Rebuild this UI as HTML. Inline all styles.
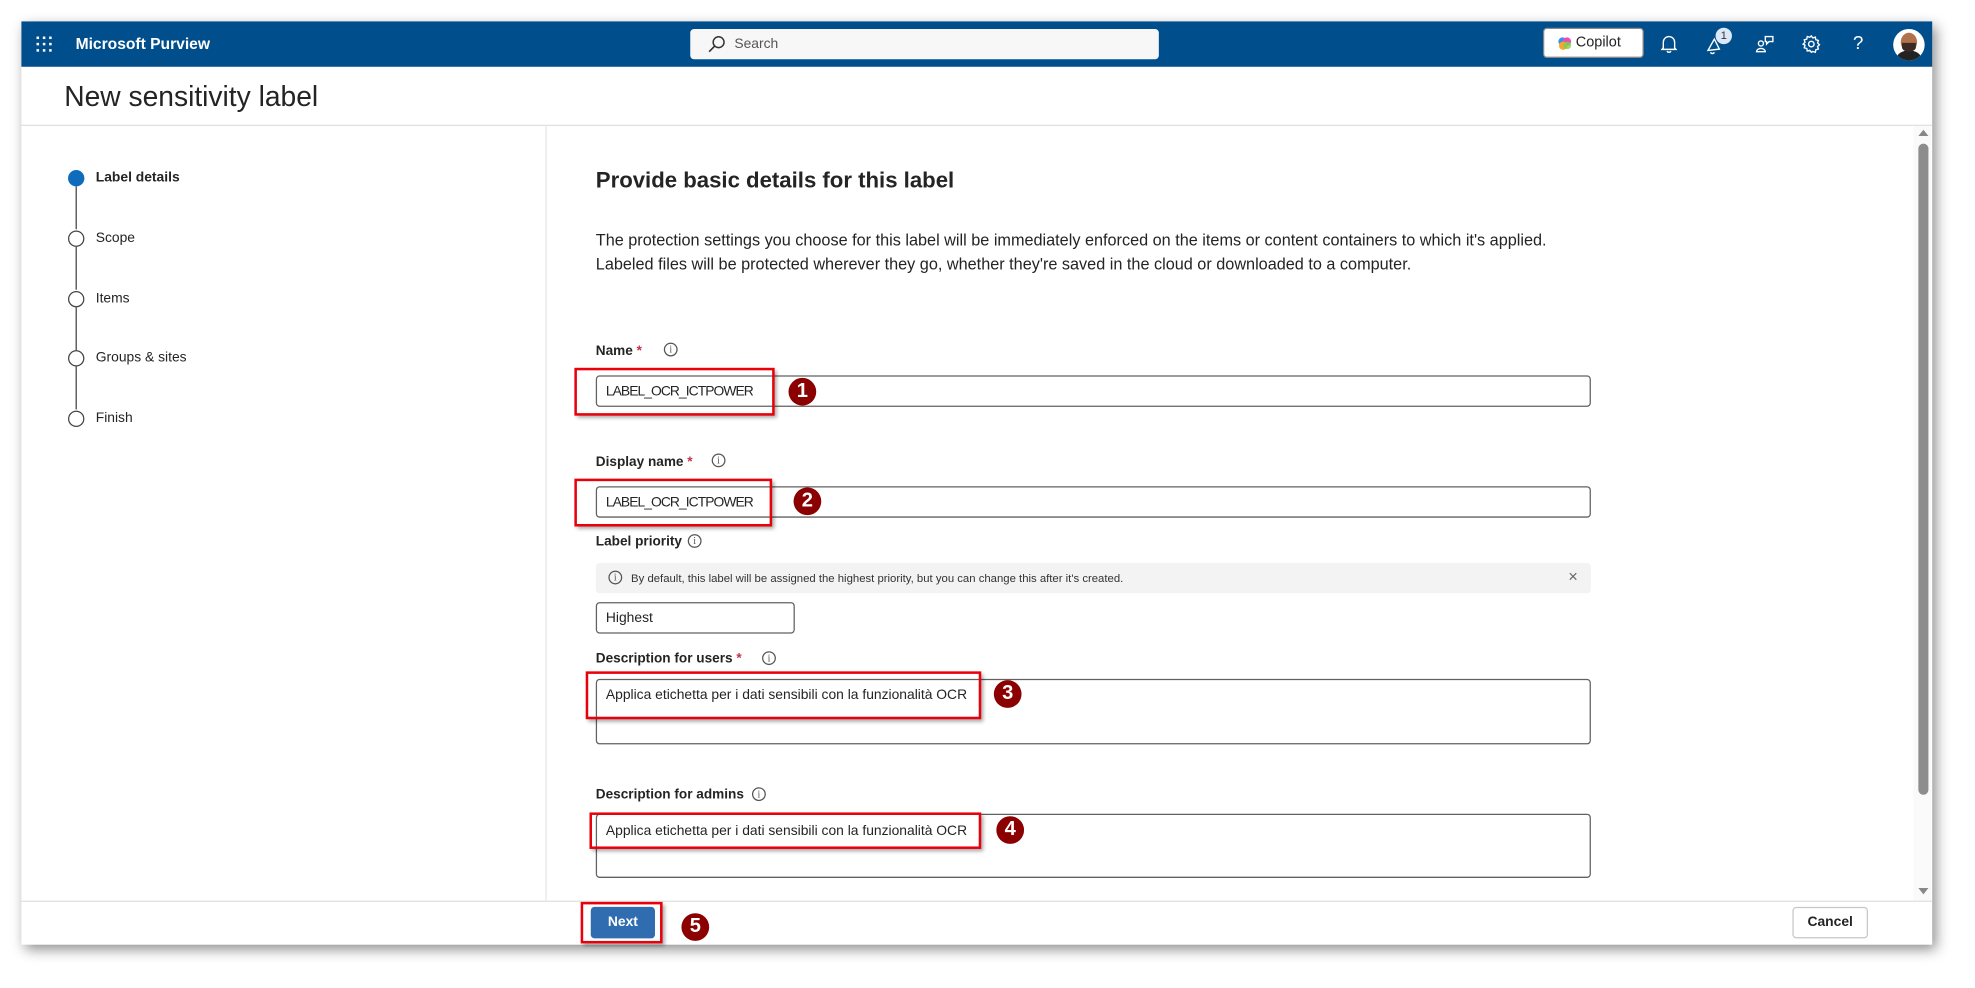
<!DOCTYPE html>
<html><head><meta charset="utf-8"><style>
*{box-sizing:border-box;margin:0;padding:0}
html,body{width:1975px;height:987px;overflow:hidden;background:#fff;font-family:"Liberation Sans",sans-serif;color:#242424}
#s{position:absolute;left:0;top:0;width:1568px;height:784px;transform:scale(1.2596);transform-origin:0 0}
.a{position:absolute}
.win{left:17px;top:17px;width:1517px;height:733px;background:#fff;box-shadow:3px 4px 10px rgba(0,0,0,.45)}
.hdr{left:17px;top:17px;width:1517px;height:36px;background:#004e8c}
.lbl{font-size:10.8px;font-weight:bold;color:#242424}
.inp{border:1px solid #616161;border-radius:3px;background:#fff;font-size:11px;padding-left:7px;color:#242424}
.red{border:2.5px solid #e8000b;box-shadow:2px 2px 3px rgba(0,0,0,.35)}
.num{width:22px;height:22px;border-radius:50%;background:#8b0000;color:#fff;font-weight:bold;font-size:16px;text-align:center;line-height:22px}
.step{left:54px;width:13px;height:13px;border-radius:50%;border:1.6px solid #444;background:#fff}
.stl{left:76px;font-size:11px}
.vl{left:60px;width:1px;background:#444}
.inf{width:11px;height:11px;border:1px solid #555;border-radius:50%;font-size:8px;text-align:center;line-height:9px;color:#555;font-family:"Liberation Serif",serif}
.lo{letter-spacing:-.75px}
</style></head><body><div id="s">
<div class="a win"></div>
<div class="a hdr"></div>
<svg class="a" style="left:28px;top:28px" width="14" height="14"><g fill="#fff"><rect x="1" y="1" width="2" height="2"/><rect x="6" y="1" width="2" height="2"/><rect x="11" y="1" width="2" height="2"/><rect x="1" y="6" width="2" height="2"/><rect x="6" y="6" width="2" height="2"/><rect x="11" y="6" width="2" height="2"/><rect x="1" y="11" width="2" height="2"/><rect x="6" y="11" width="2" height="2"/><rect x="11" y="11" width="2" height="2"/></g></svg>
<div class="a" style="left:60px;top:28px;color:#fff;font-size:12.4px;font-weight:bold">Microsoft Purview</div>
<div class="a" style="left:548px;top:23px;width:372px;height:24px;background:#f7f7f7;border-radius:3px"></div>
<svg class="a" style="left:561px;top:27px" width="16" height="16"><circle cx="9.5" cy="6.5" r="4.3" fill="none" stroke="#333" stroke-width="1.2"/><path d="M6.3 9.7L2 14" stroke="#333" stroke-width="1.3"/></svg>
<div class="a" style="left:583px;top:29px;font-size:11px;color:#555">Search</div>
<div class="a" style="left:1225px;top:22px;width:80px;height:24px;background:#fff;border:1px solid #888;border-radius:3px"></div>
<svg class="a" style="left:1237px;top:29px" width="11" height="11"><circle cx="3.5" cy="4" r="3.3" fill="#3b8df0"/><circle cx="7" cy="4" r="3.3" fill="#e94fb7"/><circle cx="4" cy="7.3" r="3.3" fill="#f3a72f"/><circle cx="7.3" cy="7" r="3" fill="#7ad04c" opacity=".8"/></svg>
<div class="a" style="left:1251px;top:28px;font-size:11.5px;color:#242424">Copilot</div>
<svg class="a" style="left:1317px;top:27px" width="16" height="16" fill="none" stroke="#fff" stroke-width="1.1"><path d="M3.5 11V6.5a4.5 4.5 0 0 1 9 0V11l1 1.2h-11z"/><path d="M6.5 13.5a1.6 1.6 0 0 0 3 0"/></svg>
<svg class="a" style="left:1354px;top:28px" width="16" height="16" fill="none" stroke="#fff" stroke-width="1.1"><path d="M2 12l5-9 4 8z"/><path d="M4 13.5a1.6 1.6 0 0 0 3 0"/></svg>
<div class="a" style="left:1362px;top:22px;width:13px;height:13px;border-radius:50%;background:#dbe8f8;color:#333;font-size:9px;text-align:center;line-height:13px">1</div>
<svg class="a" style="left:1393px;top:27px" width="16" height="16" fill="none" stroke="#fff" stroke-width="1.1"><circle cx="5" cy="7.5" r="2"/><path d="M1.5 14a3.5 2.5 0 0 1 7 0z"/><path d="M8.5 2h6v4h-3l-2 2v-2h-1z"/></svg>
<svg class="a" style="left:1430px;top:27px" width="16" height="16" fill="none" stroke="#fff" stroke-width="1.1"><circle cx="8" cy="8" r="2.2"/><path d="M8 1.5l1.2 1.6 2-.6.4 2 2 .6-.6 2 1.5 1.4-1.5 1.4.6 2-2 .6-.4 2-2-.6L8 14.5l-1.2-1.6-2 .6-.4-2-2-.6.6-2L1.5 8l1.5-1.4-.6-2 2-.6.4-2 2 .6z"/></svg>
<div class="a" style="left:1471px;top:26px;color:#fff;font-size:15px">?</div>
<div class="a" style="left:1503px;top:23px;width:25px;height:25px;border-radius:50%;background:#fff;overflow:hidden"><div class="a" style="left:6px;top:3px;width:13px;height:15px;border-radius:50%;background:#b0724a"></div><div class="a" style="left:3px;top:17px;width:19px;height:12px;border-radius:50% 50% 0 0;background:#222"></div><div class="a" style="left:7px;top:11px;width:11px;height:7px;border-radius:0 0 50% 50%;background:#3a2a22"></div></div>
<div class="a" style="left:51px;top:64px;font-size:22.4px;color:#242424">New sensitivity label</div>
<div class="a" style="left:17px;top:99px;width:1517px;height:1px;background:#e0e0e0"></div>
<div class="a" style="left:433px;top:100px;width:1px;height:615px;background:#e6e6e6"></div>
<div class="a" style="left:54px;top:135px;width:13px;height:13px;border-radius:50%;background:#0f6cbd"></div>
<div class="a vl" style="top:148px;height:34px"></div><div class="a vl" style="top:196px;height:34px"></div><div class="a vl" style="top:244px;height:34px"></div><div class="a vl" style="top:291px;height:34px"></div>
<div class="a step" style="top:183px"></div><div class="a step" style="top:231px"></div><div class="a step" style="top:278px"></div><div class="a step" style="top:326px"></div>
<div class="a stl" style="top:135px;font-weight:bold">Label details</div>
<div class="a stl" style="top:183px">Scope</div>
<div class="a stl" style="top:231px">Items</div>
<div class="a stl" style="top:278px">Groups &amp; sites</div>
<div class="a stl" style="top:326px">Finish</div>
<div class="a" style="left:473px;top:133px;font-size:17.6px;font-weight:bold;color:#242424">Provide basic details for this label</div>
<div class="a" style="left:473px;top:181px;font-size:12.9px;line-height:19px;width:820px;white-space:nowrap">The protection settings you choose for this label will be immediately enforced on the items or content containers to which it's applied.<br>Labeled files will be protected wherever they go, whether they're saved in the cloud or downloaded to a computer.</div>
<div class="a lbl" style="left:473px;top:273px">Name <span style="color:#c4314b">*</span></div><div class="a inf" style="left:527px;top:272px">i</div>
<div class="a inp" style="left:473px;top:298px;width:790px;height:25px;line-height:25px"><span class="lo">LABEL_OCR_ICTPOWER</span></div>
<div class="a lbl" style="left:473px;top:361px">Display name <span style="color:#c4314b">*</span></div><div class="a inf" style="left:565px;top:360px">i</div>
<div class="a inp" style="left:473px;top:386px;width:790px;height:25px;line-height:25px"><span class="lo">LABEL_OCR_ICTPOWER</span></div>
<div class="a lbl" style="left:473px;top:424px">Label priority</div><div class="a inf" style="left:546px;top:424px">i</div>
<div class="a" style="left:473px;top:447px;width:790px;height:24px;background:#f3f3f3;border-radius:3px"></div>
<div class="a inf" style="left:483px;top:453px">i</div>
<div class="a" style="left:501px;top:454px;font-size:9px;color:#333">By default, this label will be assigned the highest priority, but you can change this after it's created.</div>
<div class="a" style="left:1245px;top:450px;font-size:13px;color:#666">×</div>
<div class="a inp" style="left:473px;top:478px;width:158px;height:25px;line-height:25px">Highest</div>
<div class="a lbl" style="left:473px;top:517px">Description for users <span style="color:#c4314b">*</span></div><div class="a inf" style="left:605px;top:517px">i</div>
<div class="a inp" style="left:473px;top:539px;width:790px;height:52px;padding-top:6px">Applica etichetta per i dati sensibili con la funzionalità OCR</div>
<div class="a lbl" style="left:473px;top:625px">Description for admins</div><div class="a inf" style="left:597px;top:625px">i</div>
<div class="a inp" style="left:473px;top:646px;width:790px;height:51px;padding-top:7px">Applica etichetta per i dati sensibili con la funzionalità OCR</div>
<div class="a" style="left:1519px;top:100px;width:14px;height:615px;background:#fafafa"></div>
<div class="a" style="left:1523px;top:103px;width:0;height:0;border:4px solid transparent;border-bottom:5px solid #888;border-top:0"></div>
<div class="a" style="left:1523px;top:114px;width:8px;height:517px;border-radius:4px;background:#8d8d8d"></div>
<div class="a" style="left:1523px;top:705px;width:0;height:0;border:4px solid transparent;border-top:5px solid #888;border-bottom:0"></div>
<div class="a" style="left:17px;top:715px;width:1517px;height:1px;background:#e0e0e0"></div>
<div class="a" style="left:469px;top:720px;width:51px;height:25px;background:#2f6cb0;border-radius:3px;color:#fff;font-size:11px;font-weight:bold;text-align:center;line-height:25px">Next</div>
<div class="a" style="left:1423px;top:720px;width:60px;height:25px;border:1px solid #c7c7c7;border-radius:3px;font-size:11px;font-weight:bold;text-align:center;line-height:23px">Cancel</div>
<div class="a red" style="left:456px;top:292px;width:159px;height:38px"></div>
<div class="a red" style="left:456px;top:380px;width:157px;height:38px"></div>
<div class="a red" style="left:465px;top:533px;width:314px;height:38px"></div>
<div class="a red" style="left:468px;top:645px;width:311px;height:29px"></div>
<div class="a red" style="left:461px;top:716px;width:65px;height:33px"></div>
<div class="a num" style="left:626px;top:300px">1</div>
<div class="a num" style="left:630px;top:387px">2</div>
<div class="a num" style="left:789px;top:540px">3</div>
<div class="a num" style="left:791px;top:648px">4</div>
<div class="a num" style="left:541px;top:725px">5</div>
</div></body></html>
